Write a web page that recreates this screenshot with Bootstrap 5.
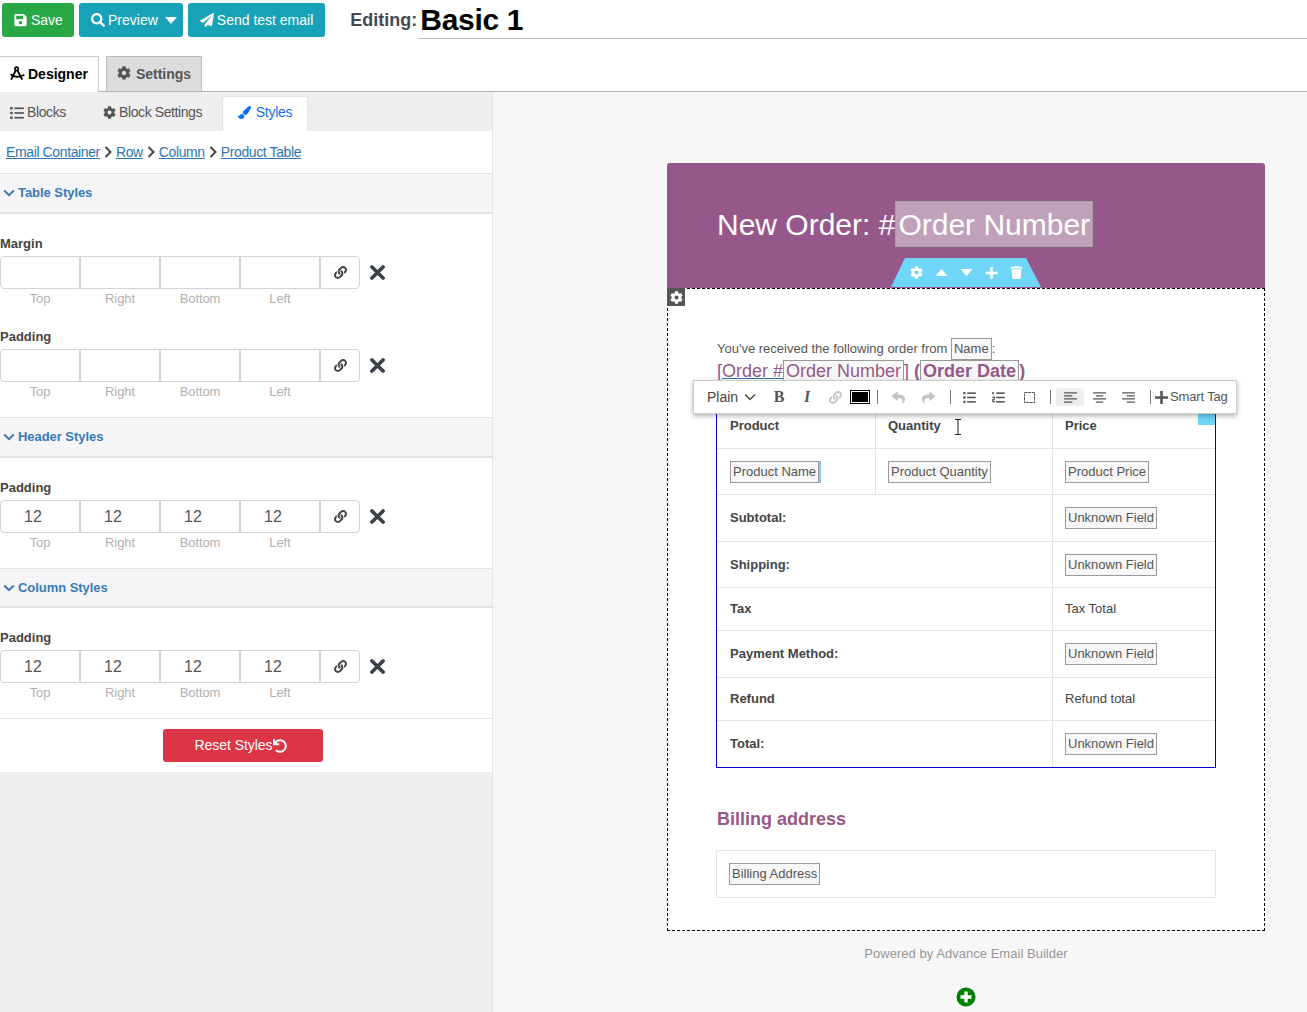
<!DOCTYPE html>
<html lang="en">
<head>
<meta charset="utf-8">
<title>Email Builder</title>
<link href="https://cdn.jsdelivr.net/npm/bootstrap@5.3.0/dist/css/bootstrap.min.css" rel="stylesheet">
<style>
html,body{height:1012px;overflow:hidden}
body{font-family:"Liberation Sans",Arial,sans-serif;font-size:13px;color:#444;background:#fff}
svg{fill:currentColor;display:inline-block;flex:none}
.topbar{height:56px;padding:3px 0 0 2px;gap:5px}
.tbtn{font-size:14px;height:34px;padding:0 12px;border:0;border-radius:3px;color:#fff;display:inline-flex;align-items:center;gap:3px;white-space:nowrap}
.tsave{background:#28a745;width:72px;gap:4px}
.tinfo{background:#17a2b8}
.tprev{padding-right:6px}
.tinfo:hover,.tsave:hover{color:#fff}
.edit-lbl{font-size:18px;font-weight:700;color:#454a52;margin-left:20px;margin-top:7px;line-height:20px}
.edit-name{flex:1;height:39px;margin-left:-4px;margin-top:-3px;border-bottom:1px solid #bbb;font:700 30px/40px "Liberation Sans",sans-serif;color:#000;padding-left:2px;letter-spacing:-.3px}
.maintabs{height:36px;border-bottom:1px solid #b5b5b5;gap:7px}
.mtab{font-size:14px;font-weight:700;display:flex;align-items:center;gap:3px;height:36px;padding:0 10px;border:1px solid #ccc;border-left:0;border-bottom:0;background:#fff;color:#000;text-decoration:none}
.mtab svg{margin-top:-3px}
.mtab-off{height:35px;background:#dcdcdf;color:#555;border:1px solid #bbb;border-bottom:0;padding:0 10px;margin:0;gap:5px}
.workarea{height:920px}
.sidepanel{width:493px;flex:none;background:#eee;border-right:1px solid #e3e3e6}
.subtabs{height:39px;background:#eee;padding-top:4px}
.stab{display:flex;align-items:center;gap:3px;height:35px;padding-bottom:2px;color:#555;text-decoration:none;font-size:14px;letter-spacing:-.4px}
.stab-a{margin-left:10px;width:93px}
.stab-b{width:119px}
.stab-c{width:86px;background:#fff;color:#0d6efd;border:1px solid #e3e3e6;border-bottom:0;border-radius:3px 3px 0 0;justify-content:center;gap:5px;letter-spacing:-.3px;padding-bottom:3px}
.crumbs{height:42px;background:#fff;padding-left:6px;gap:4px;font-size:14px;letter-spacing:-.38px}
.crumbs a{color:#2f74ae}
.crumbs svg{color:#444}
.sect-h{height:41px;background:#f5f5f8;border-top:1px solid #e3e3e6;border-bottom:2px solid #e3e3e6;padding-left:3px;gap:3px;font-weight:700;color:#3a7ab8;letter-spacing:-.05px}
.sect-h-c{height:40px}
.sect-b{background:#fff;padding-top:16px}
.f-lbl{font-weight:700;color:#444;height:17px;line-height:17px;margin-bottom:4px}
.f-lbl-first{margin-top:5px}
.f-row{width:360px;height:33px;flex-wrap:nowrap}
.fbox{flex:none!important;width:80px!important;height:33px;min-height:0;padding:5px 0 0 23px;font-size:16px;line-height:22px;color:#555;border:1px solid #ced4da;border-radius:0;margin-left:0!important}
.fbox:first-child{border-radius:4px 0 0 4px}
.flink{width:40px;height:33px;justify-content:center;padding:0;background:#fff;border:1px solid #ced4da;border-radius:0 4px 4px 0!important;color:#444;margin-left:0!important}
.f-x{margin-left:10px;color:#3c4149}
.caps{width:320px;margin-top:1px}
.caps span{width:80px;text-align:center;color:#b0b0b0;font-size:13px;line-height:17px;letter-spacing:-.1px}
.fgrp{padding-bottom:21px}
.fgrp:last-child{padding-bottom:17px}
.reset-w{height:54px;background:#fff;border-top:1px solid #e3e3e6;padding:10px 6px 0 0}
.reset-btn{width:160px;height:33px;background:#dc3545;border:0;border-radius:3px;color:#fff;font-size:14px;letter-spacing:-.05px;display:flex;align-items:center;justify-content:center;padding:0 5px 0 0}
.canvas-side{flex:1;background:#f7f7f7;padding:71px 0 0 174px}
.mailbox{position:relative;width:598px}
.m-head{height:125px;background:#96588a;border-radius:3px 3px 0 0;padding:38px 0 0 50px;color:#fff;font-size:30px;line-height:48px}
.m-head-tag{display:inline-block;height:46px;background:#c1a1ba;border:1px solid #a3a3a3;padding:0 2px;line-height:46px;vertical-align:top}
.blocktools{position:absolute;left:224px;top:95px;width:150px;height:29px;background:#6fd6f8;clip-path:polygon(14px 0,135px 0,150px 100%,0 100%);color:#fff;gap:12px}
.blockgear{position:absolute;left:0;top:125px;width:18px;height:18px;background:#555;color:#fff;z-index:3}
.m-body{height:643px;background:#fff;border:1px dashed #000;padding:49px 48px 0 49px}
.intro{font-size:13px;line-height:18px;color:#555;height:18px;white-space:nowrap}
.ftag{display:inline-block;background:#f7f7f7;border:1px solid #999;padding:0 2px;color:#555;line-height:20px}
.ftag-caret{box-shadow:2px 0 0 #8fc3f0}
.ordline{font-size:18px;line-height:22px;color:#96588a;height:22px;margin-top:4px;white-space:nowrap}
.ordline a{color:#96588a;text-decoration-color:#2f74ae}
.ordline .ftag{color:#96588a;line-height:20px}
.otable{width:500px;margin:22px 0 0 -1px;border:1px solid #00c;border-collapse:separate;border-spacing:0;table-layout:fixed;font-size:13px}
.otable td,.otable th{border:0;border-right:1px solid #e5e5e5;border-bottom:1px solid #e5e5e5;padding:0 12px;vertical-align:middle;background:#fff;color:#444}
.otable th{font-weight:700}
.otable tr:first-child th{padding-bottom:2px}
.otable tr td:first-child,.otable tr th:first-child{padding-left:13px}
.otable tr td:last-child,.otable tr th:last-child{border-right:0}
.otable tr:last-child td,.otable tr:last-child th{border-bottom:0}
.billh{font-size:18px;font-weight:700;color:#96588a;margin:40px 0 0;line-height:22px;height:22px}
.billbox{width:500px;height:48px;margin:20px 0 0 -1px;border:1px solid #e5e5e5;padding:12px;font-size:13px}
.edit-corner{position:absolute;left:531px;top:245px;width:17px;height:17px;background:#6fd6f8;color:#fff;z-index:1}
.rt{position:absolute;left:26px;top:217px;width:544px;height:34px;background:#fff;border:1px solid #ccc;box-shadow:0 2px 5px rgba(0,0,0,.3);z-index:5;color:#555;padding-left:13px}
.rt-plain{width:58px;font-size:14px;gap:6px;color:#444}
.rti{width:28px;height:18px;flex:none;justify-content:center;border-radius:3px;color:#555}
.rti-b{font:700 16px "Liberation Serif",serif}
.rti-i{font:italic 700 16px "Liberation Serif",serif}
.rt-dis{color:#c4c4c4}
.rt-col{width:20px;height:14px;border:1px solid #000;padding:1px;background:#fff;margin-left:1px;flex:none}
.rt-col i{display:block;height:100%;background:#000}
.rt-sep{width:1px;height:14px;background:#777;flex:none}
.rt-act{background:#eee}
.rt-tag{color:#555;gap:2px;font-size:13px;letter-spacing:-.15px;margin-left:4px}
.ms-rt1{margin-left:1px}
.ms-rt2{margin-left:2px}
.ms-rt3{margin-left:3px}
.ms-rt5{margin-left:5px}
.ms-rt6{margin-left:6px}
.ms-rt7{margin-left:7px}
.powered{text-align:center;color:#969696;font-size:13px;line-height:14px;margin-top:16px;letter-spacing:.03px}
.addblk{margin-top:25px;color:#008000}
.cursor-i{position:absolute;left:287px;top:256px;z-index:2;stroke:#222;fill:none}
</style>
</head>
<body>
<svg width="0" height="0" style="position:absolute">
<defs>
<symbol id="i-cog" viewBox="0 0 512 512"><path d="M487.4 315.7l-42.6-24.6c4.3-23.2 4.3-47 0-70.2l42.6-24.6c4.9-2.8 7.1-8.6 5.5-14-11.1-35.6-30-67.8-54.7-94.6-3.8-4.1-10-5.1-14.8-2.3L380.8 110c-17.9-15.4-38.5-27.3-60.8-35.1V25.8c0-5.6-3.9-10.5-9.4-11.7-36.7-8.2-74.3-7.8-109.2 0-5.5 1.2-9.4 6.1-9.4 11.7V75c-22.2 7.9-42.8 19.8-60.8 35.1L88.7 85.5c-4.9-2.8-11-1.9-14.8 2.3-24.7 26.7-43.6 58.9-54.7 94.6-1.7 5.4.6 11.2 5.5 14L67.3 221c-4.3 23.2-4.3 47 0 70.2l-42.6 24.6c-4.9 2.8-7.1 8.6-5.5 14 11.1 35.6 30 67.8 54.7 94.6 3.8 4.1 10 5.1 14.8 2.3l42.6-24.6c17.9 15.4 38.5 27.3 60.8 35.1v49.2c0 5.6 3.9 10.5 9.4 11.7 36.7 8.2 74.3 7.8 109.2 0 5.5-1.2 9.4-6.1 9.4-11.7v-49.2c22.2-7.9 42.8-19.8 60.8-35.1l42.6 24.6c4.9 2.8 11 1.9 14.8-2.3 24.7-26.7 43.6-58.9 54.7-94.6 1.5-5.5-.7-11.3-5.6-14.1zM256 336c-44.1 0-80-35.9-80-80s35.9-80 80-80 80 35.9 80 80-35.9 80-80 80z"/></symbol>
<symbol id="i-search" viewBox="0 0 512 512"><path d="M505 442.7L405.3 343c-4.5-4.5-10.6-7-17-7H372c27.6-35.3 44-79.7 44-128C416 93.1 322.9 0 208 0S0 93.1 0 208s93.1 208 208 208c48.3 0 92.7-16.4 128-44v16.3c0 6.4 2.5 12.5 7 17l99.7 99.7c9.4 9.4 24.6 9.4 33.9 0l28.3-28.3c9.4-9.4 9.4-24.6.1-34zM208 336c-70.7 0-128-57.2-128-128 0-70.7 57.2-128 128-128 70.7 0 128 57.2 128 128 0 70.7-57.2 128-128 128z"/></symbol>
<symbol id="i-save" viewBox="0 0 448 512"><path d="M433.941 129.941l-83.882-83.882A48 48 0 0 0 316.118 32H48C21.49 32 0 53.49 0 80v352c0 26.51 21.49 48 48 48h352c26.51 0 48-21.49 48-48V163.882a48 48 0 0 0-14.059-33.941zM224 416c-35.346 0-64-28.654-64-64 0-35.346 28.654-64 64-64s64 28.654 64 64c0 35.346-28.654 64-64 64zm96-304.52V212c0 6.627-5.373 12-12 12H76c-6.627 0-12-5.373-12-12V108c0-6.627 5.373-12 12-12h228.52c3.183 0 6.235 1.264 8.485 3.515l3.48 3.48A11.996 11.996 0 0 1 320 111.48z"/></symbol>
<symbol id="i-plane" viewBox="0 0 512 512"><path d="M476 3.2L12.5 270.6c-18.1 10.4-15.8 35.6 2.2 43.2L121 358.4l287.3-253.2c5.5-4.9 13.3 2.6 8.6 8.3L176 407v80.5c0 23.6 28.5 32.9 42.5 15.8L282 426l124.6 52.2c14.2 6 30.4-2.9 33-18.2l72-432C515 7.8 493.3-6.8 476 3.2z"/></symbol>
<symbol id="i-brush" viewBox="0 0 512 512"><path d="M167.02 309.34c-40.12 2.58-76.53 17.86-97.19 72.3-2.35 6.21-8 9.98-14.59 9.98-11.11 0-45.46-27.67-55.25-34.35C0 439.62 37.93 512 128 512c75.86 0 128-43.77 128-120.19 0-3.11-.65-6.08-.97-9.13l-88.01-73.34zM457.89 0c-15.16 0-29.37 6.71-40.21 16.45C213.27 199.05 192 203.34 192 257.09c0 13.7 3.25 26.76 8.73 38.7l63.82 53.18c7.21 1.8 14.64 3.03 22.39 3.03 62.11 0 98.11-45.47 211.16-256.46 7.38-14.35 13.9-29.85 13.9-45.99C512 20.64 486 0 457.89 0z"/></symbol>
<symbol id="i-link" viewBox="0 0 512 512"><path d="M326.612 185.391c59.747 59.809 58.927 155.698.36 214.59-.11.12-.24.25-.36.37l-67.2 67.2c-59.27 59.27-155.699 59.262-214.96 0-59.27-59.26-59.27-155.7 0-214.96l37.106-37.106c9.84-9.84 26.786-3.3 27.294 10.606.648 17.722 3.826 35.527 9.69 52.721 1.986 5.822.567 12.262-3.783 16.612l-13.087 13.087c-28.026 28.026-28.905 73.66-1.155 101.96 28.024 28.579 74.086 28.749 102.325.51l67.2-67.19c28.191-28.191 28.073-73.757 0-101.83-3.701-3.694-7.429-6.564-10.341-8.569a16.037 16.037 0 0 1-6.947-12.606c-.396-10.567 3.348-21.456 11.698-29.806l21.054-21.055c5.521-5.521 14.182-6.199 20.584-1.731a152.482 152.482 0 0 1 20.522 17.197zM467.547 44.449c-59.261-59.262-155.69-59.27-214.96 0l-67.2 67.2c-.12.12-.25.25-.36.37-58.566 58.892-59.387 154.781.36 214.59a152.454 152.454 0 0 0 20.521 17.196c6.402 4.468 15.064 3.789 20.584-1.731l21.054-21.055c8.35-8.35 12.094-19.239 11.698-29.806a16.037 16.037 0 0 0-6.947-12.606c-2.912-2.005-6.64-4.875-10.341-8.569-28.073-28.073-28.191-73.639 0-101.83l67.2-67.19c28.239-28.239 74.3-28.069 102.325.51 27.75 28.3 26.872 73.934-1.155 101.96l-13.087 13.087c-4.35 4.35-5.769 10.79-3.783 16.612 5.864 17.194 9.042 34.999 9.69 52.721.509 13.906 17.454 20.446 27.294 10.606l37.106-37.106c59.271-59.259 59.271-155.699.001-214.959z"/></symbol>
<symbol id="i-undo" viewBox="0 0 512 512"><path d="M212.333 224.333H12c-6.627 0-12-5.373-12-12V12C0 5.373 5.373 0 12 0h48c6.627 0 12 5.373 12 12v78.112C117.773 39.279 184.26 7.47 258.175 8.007c136.906.994 246.448 111.623 246.157 248.532C504.041 393.258 393.12 504 256.333 504c-64.089 0-122.496-24.313-166.51-64.215-5.099-4.622-5.334-12.554-.467-17.42l33.967-33.967c4.474-4.474 11.662-4.717 16.401-.525C170.76 415.336 211.58 432 256.333 432c97.268 0 176-78.716 176-176 0-97.267-78.716-176-176-176-58.496 0-110.28 28.476-142.274 72.333h98.274c6.627 0 12 5.373 12 12v48c0 6.627-5.373 12-12 12z"/></symbol>
<symbol id="i-reply" viewBox="0 0 512 512"><path d="M8.309 189.836L184.313 37.851C199.719 24.546 224 35.347 224 56.015v80.053c160.629 1.839 288 34.032 288 186.258 0 61.441-39.581 122.309-83.333 154.132-13.653 9.931-33.111-2.533-28.077-18.631 45.344-145.012-21.507-183.51-176.59-185.742V360c0 20.7-24.3 31.453-39.687 18.164l-176.004-152c-11.071-9.562-11.086-26.753 0-36.328z"/></symbol>
<symbol id="i-forward" viewBox="0 0 512 512"><path transform="matrix(-1 0 0 1 512 0)" d="M8.309 189.836L184.313 37.851C199.719 24.546 224 35.347 224 56.015v80.053c160.629 1.839 288 34.032 288 186.258 0 61.441-39.581 122.309-83.333 154.132-13.653 9.931-33.111-2.533-28.077-18.631 45.344-145.012-21.507-183.51-176.59-185.742V360c0 20.7-24.3 31.453-39.687 18.164l-176.004-152c-11.071-9.562-11.086-26.753 0-36.328z"/></symbol>
<symbol id="i-trash" viewBox="0 0 448 512"><path d="M432 32H312l-9.400-18.700A24 24 0 0 0 281.100 0H166.800a23.700 23.700 0 0 0-21.400 13.300L136 32H16A16 16 0 0 0 0 48v32a16 16 0 0 0 16 16h416a16 16 0 0 0 16-16V48a16 16 0 0 0-16-16zM53.200 467a48 48 0 0 0 47.900 45h245.800a48 48 0 0 0 47.900-45L416 128H32z"/></symbol>
<symbol id="i-list" viewBox="0 0 16 14"><rect y="0" width="3" height="3" rx=".6"/><rect y="5.500" width="3" height="3" rx=".6"/><rect y="11" width="3" height="3" rx=".6"/><rect x="5" y=".5" width="11" height="2"/><rect x="5" y="6" width="11" height="2"/><rect x="5" y="11.500" width="11" height="2"/></symbol>
<symbol id="i-olist" viewBox="0 0 16 14"><rect x="0" y="0" width="2" height="3"/><path d="M0 6h3.500v4H1.500v1.500h2V13H0V9h2V7.500H0z"/><rect x="5" y=".5" width="11" height="2"/><rect x="5" y="6" width="11" height="2"/><rect x="5" y="11.500" width="11" height="2"/></symbol>
<symbol id="i-chev-d" viewBox="0 0 12 8"><path d="M1.200 1.500 6 6.200l4.800-4.700" fill="none" stroke="currentColor" stroke-width="2"/></symbol>
<symbol id="i-chev-d2" viewBox="0 0 12 8"><path d="M1 1.500 6 6.500l5-5" fill="none" stroke="currentColor" stroke-width="1.400"/></symbol>
<symbol id="i-chev-r" viewBox="0 0 8 12"><path d="M1.500 1 6.500 6l-5 5" fill="none" stroke="currentColor" stroke-width="2"/></symbol>
<symbol id="i-x" viewBox="0 0 14 14"><path d="M1.800 1.800 12.200 12.200M12.200 1.800 1.800 12.200" fill="none" stroke="currentColor" stroke-width="3.400" stroke-linecap="round"/></symbol>
<symbol id="i-compass" viewBox="0 0 16 16"><circle cx="7" cy="3" r="1.800" fill="none" stroke="currentColor" stroke-width="1.800"/><path d="M6 5 1.200 14.500M8 5l5 9.500M.8 8.500c2.500 3.500 9.500 4 14.500.8" fill="none" stroke="currentColor" stroke-width="2"/></symbol>
<symbol id="i-al" viewBox="0 0 14 12"><path d="M0 1h14M0 4.300h9M0 7.600h14M0 11h9" stroke="currentColor" stroke-width="1.300"/></symbol>
<symbol id="i-ac" viewBox="0 0 14 12"><path d="M0 1h14M3 4.300h8M0 7.600h14M3 11h8" stroke="currentColor" stroke-width="1.300"/></symbol>
<symbol id="i-ar" viewBox="0 0 14 12"><path d="M0 1h14M5 4.300h9M0 7.600h14M5 11h9" stroke="currentColor" stroke-width="1.300"/></symbol>
</defs>
</svg>

<div class="d-flex topbar">
  <a class="btn tbtn tsave" href="#"><svg width="13" height="14"><use href="#i-save"/></svg>Save</a>
  <a class="btn tbtn tinfo tprev" href="#"><svg width="14" height="14"><use href="#i-search"/></svg>Preview<svg width="12" height="7" viewBox="0 0 12 7" class="ms-1"><path d="M0 0h12L6 7z"/></svg></a>
  <a class="btn tbtn tinfo" href="#"><svg width="14" height="14"><use href="#i-plane"/></svg>Send test email</a>
  <div class="edit-lbl">Editing:</div>
  <div class="edit-name">Basic 1</div>
</div>

<div class="d-flex maintabs">
  <a class="mtab" href="#"><svg width="15" height="15"><use href="#i-compass"/></svg>Designer</a>
  <a class="mtab mtab-off" href="#"><svg width="14" height="14"><use href="#i-cog"/></svg>Settings</a>
</div>

<div class="d-flex workarea">
  <aside class="sidepanel">
    <nav class="d-flex subtabs">
      <a class="stab stab-a" href="#"><svg width="14" height="12"><use href="#i-list"/></svg>Blocks</a>
      <a class="stab stab-b" href="#"><svg width="13" height="13"><use href="#i-cog"/></svg>Block Settings</a>
      <a class="stab stab-c" href="#"><svg width="13" height="13"><use href="#i-brush"/></svg>Styles</a>
    </nav>
    <div class="d-flex align-items-center crumbs">
      <a href="#">Email Container</a><svg width="8" height="12"><use href="#i-chev-r"/></svg>
      <a href="#">Row</a><svg width="8" height="12"><use href="#i-chev-r"/></svg>
      <a href="#">Column</a><svg width="8" height="12"><use href="#i-chev-r"/></svg>
      <a href="#">Product Table</a>
    </div>

    <div class="d-flex align-items-center sect-h"><svg width="12" height="8"><use href="#i-chev-d"/></svg>Table Styles</div>
    <div class="sect-b">
      <div class="fgrp">
        <div class="f-lbl f-lbl-first">Margin</div>
        <div class="d-flex align-items-center">
          <div class="input-group f-row"><div class="form-control fbox"></div><div class="form-control fbox"></div><div class="form-control fbox"></div><div class="form-control fbox"></div><span class="input-group-text flink"><svg width="13" height="13"><use href="#i-link"/></svg></span></div>
          <svg class="f-x" width="15" height="15"><use href="#i-x"/></svg>
        </div>
        <div class="d-flex caps"><span>Top</span><span>Right</span><span>Bottom</span><span>Left</span></div>
      </div>
      <div class="fgrp">
        <div class="f-lbl">Padding</div>
        <div class="d-flex align-items-center">
          <div class="input-group f-row"><div class="form-control fbox"></div><div class="form-control fbox"></div><div class="form-control fbox"></div><div class="form-control fbox"></div><span class="input-group-text flink"><svg width="13" height="13"><use href="#i-link"/></svg></span></div>
          <svg class="f-x" width="15" height="15"><use href="#i-x"/></svg>
        </div>
        <div class="d-flex caps"><span>Top</span><span>Right</span><span>Bottom</span><span>Left</span></div>
      </div>
    </div>

    <div class="d-flex align-items-center sect-h"><svg width="12" height="8"><use href="#i-chev-d"/></svg>Header Styles</div>
    <div class="sect-b">
      <div class="fgrp">
        <div class="f-lbl f-lbl-first">Padding</div>
        <div class="d-flex align-items-center">
          <div class="input-group f-row"><div class="form-control fbox">12</div><div class="form-control fbox">12</div><div class="form-control fbox">12</div><div class="form-control fbox">12</div><span class="input-group-text flink"><svg width="13" height="13"><use href="#i-link"/></svg></span></div>
          <svg class="f-x" width="15" height="15"><use href="#i-x"/></svg>
        </div>
        <div class="d-flex caps"><span>Top</span><span>Right</span><span>Bottom</span><span>Left</span></div>
      </div>
    </div>

    <div class="d-flex align-items-center sect-h sect-h-c"><svg width="12" height="8"><use href="#i-chev-d"/></svg>Column Styles</div>
    <div class="sect-b">
      <div class="fgrp">
        <div class="f-lbl f-lbl-first">Padding</div>
        <div class="d-flex align-items-center">
          <div class="input-group f-row"><div class="form-control fbox">12</div><div class="form-control fbox">12</div><div class="form-control fbox">12</div><div class="form-control fbox">12</div><span class="input-group-text flink"><svg width="13" height="13"><use href="#i-link"/></svg></span></div>
          <svg class="f-x" width="15" height="15"><use href="#i-x"/></svg>
        </div>
        <div class="d-flex caps"><span>Top</span><span>Right</span><span>Bottom</span><span>Left</span></div>
      </div>
    </div>

    <div class="d-flex justify-content-center reset-w">
      <button class="btn reset-btn" type="button">Reset Styles<svg width="14" height="14"><use href="#i-undo"/></svg></button>
    </div>
  </aside>

  <main class="canvas-side">
    <div class="mailbox">
      <div class="m-head">New Order: #<span class="m-head-tag">Order Number</span></div>
      <div class="d-flex align-items-center justify-content-center blocktools">
        <svg width="13" height="13"><use href="#i-cog"/></svg>
        <svg width="13" height="7" viewBox="0 0 12 7"><path d="M6 0l6 7H0z"/></svg>
        <svg width="13" height="7" viewBox="0 0 12 7"><path d="M0 0h12L6 7z"/></svg>
        <svg width="13" height="12" viewBox="0 0 12 12"><path d="M4.800 0h2.400v4.800H12v2.400H7.200V12H4.800V7.200H0V4.800h4.800z"/></svg>
        <svg width="13" height="13"><use href="#i-trash"/></svg>
      </div>
      <div class="d-flex align-items-center justify-content-center blockgear"><svg width="13" height="13"><use href="#i-cog"/></svg></div>

      <div class="m-body">
        <div class="intro">You've received the following order from <span class="ftag">Name</span>:</div>
        <div class="ordline">[<a href="#">Order #</a><span class="ftag">Order Number</span>] <b>(<span class="ftag">Order Date</span>)</b></div>
        <table class="otable">
          <colgroup><col style="width:159px"><col style="width:177px"><col style="width:162px"></colgroup>
          <tr style="height:44px"><th>Product</th><th>Quantity</th><th>Price</th></tr>
          <tr style="height:46px"><td><span class="ftag ftag-caret">Product Name</span></td><td><span class="ftag">Product Quantity</span></td><td><span class="ftag">Product Price</span></td></tr>
          <tr style="height:47px"><th colspan="2">Subtotal:</th><td><span class="ftag">Unknown Field</span></td></tr>
          <tr style="height:46px"><th colspan="2">Shipping:</th><td><span class="ftag">Unknown Field</span></td></tr>
          <tr style="height:43px"><th colspan="2">Tax</th><td>Tax Total</td></tr>
          <tr style="height:47px"><th colspan="2">Payment Method:</th><td><span class="ftag">Unknown Field</span></td></tr>
          <tr style="height:43px"><th colspan="2">Refund</th><td>Refund total</td></tr>
          <tr style="height:46px"><th colspan="2">Total:</th><td><span class="ftag">Unknown Field</span></td></tr>
        </table>
        <h2 class="billh">Billing address</h2>
        <div class="billbox"><span class="ftag">Billing Address</span></div>
      </div>

      <div class="d-flex align-items-center rt">
        <div class="d-flex align-items-center rt-plain">Plain<svg width="12" height="8"><use href="#i-chev-d2"/></svg></div>
        <div class="d-flex align-items-center rti rti-b">B</div>
        <div class="d-flex align-items-center rti rti-i">I</div>
        <div class="d-flex align-items-center rti rt-dis"><svg width="13" height="13"><use href="#i-link"/></svg></div>
        <div class="rt-col"><i></i></div>
        <div class="rt-sep ms-rt7"></div>
        <div class="d-flex align-items-center rti rt-dis ms-rt6"><svg width="13" height="13"><use href="#i-reply"/></svg></div>
        <div class="d-flex align-items-center rti rt-dis ms-rt2"><svg width="13" height="13"><use href="#i-forward"/></svg></div>
        <div class="rt-sep ms-2"></div>
        <div class="d-flex align-items-center rti ms-1"><svg width="13" height="11"><use href="#i-list"/></svg></div>
        <div class="d-flex align-items-center rti ms-rt1"><svg width="13" height="11"><use href="#i-olist"/></svg></div>
        <div class="d-flex align-items-center rti ms-rt3"><svg width="11" height="11" viewBox="0 0 11 11"><rect x=".5" y=".5" width="10" height="10" fill="none" stroke="currentColor" stroke-dasharray="3 .6"/></svg></div>
        <div class="rt-sep ms-rt7"></div>
        <div class="d-flex align-items-center rti rt-act ms-rt5"><svg width="13" height="11"><use href="#i-al"/></svg></div>
        <div class="d-flex align-items-center rti ms-rt1"><svg width="13" height="11"><use href="#i-ac"/></svg></div>
        <div class="d-flex align-items-center rti ms-rt1"><svg width="13" height="11"><use href="#i-ar"/></svg></div>
        <div class="rt-sep ms-2"></div>
        <div class="d-flex align-items-center rt-tag"><svg width="13" height="13" viewBox="0 0 12 12"><path d="M4.800 0h2.400v4.800H12v2.400H7.200V12H4.800V7.200H0V4.800h4.800z"/></svg>Smart Tag</div>
      </div>
      <div class="edit-corner"></div>
      <svg class="cursor-i" width="8" height="16" viewBox="0 0 8 16"><path d="M1 .5h6M1 15.500h6M4 .5v15"/></svg>

      <div class="powered">Powered by Advance Email Builder</div>
      <div class="text-center addblk"><svg width="20" height="20" viewBox="0 0 20 20"><circle cx="10" cy="10" r="9.500"/><path d="M8.300 4.500h3.400v3.800h3.800v3.400h-3.800v3.800H8.300v-3.800H4.500V8.300h3.800z" fill="#fff"/></svg></div>
    </div>
  </main>
</div>
</body>
</html>
